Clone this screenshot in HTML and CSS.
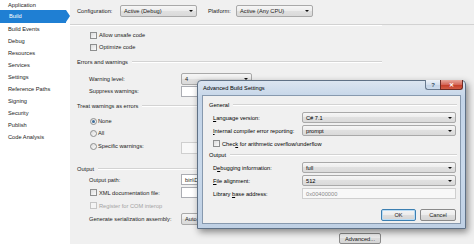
FILE: index.html
```html
<!DOCTYPE html>
<html lang="en">
<head>
  <meta charset="UTF-8">
  <title>Build - Project Properties</title>
  <link rel="stylesheet" href="styles.css">
</head>
<body>
  <div class="window">
    <ul class="nav">
      <li class="first">Application</li>
      <li class="active">Build</li>
      <li>Build Events</li>
      <li>Debug</li>
      <li>Resources</li>
      <li>Services</li>
      <li>Settings</li>
      <li>Reference Paths</li>
      <li>Signing</li>
      <li>Security</li>
      <li>Publish</li>
      <li>Code Analysis</li>
    </ul>

    <div class="panel">
      <div class="topbar">
        <span class="top-label">Configuration:</span>
        <div class="combo top-combo"><span>Active (Debug)</span><i class="arrow"></i></div>
        <span class="top-label platform">Platform:</span>
        <div class="combo top-combo"><span>Active (Any CPU)</span><i class="arrow"></i></div>
      </div>

      <div class="content">
        <div class="row ind"><span class="check"></span><span>Allow unsafe code</span></div>
        <div class="row ind"><span class="check"></span><span>Optimize code</span></div>

        <div class="group g-errors">Errors and warnings</div>
        <div class="row ind g-first"><span class="label">Warning level:</span><div class="combo narrow"><span>4</span><i class="arrow"></i></div></div>
        <div class="row ind"><span class="label">Suppress warnings:</span><div class="textbox wide"></div></div>

        <div class="group g-treat">Treat warnings as errors</div>
        <div class="row ind g-first"><span class="radio on"></span><span>None</span></div>
        <div class="row ind"><span class="radio"></span><span>All</span></div>
        <div class="row ind tall"><span class="radio"></span><span class="radio-label">Specific warnings:</span><div class="textbox wide off"></div></div>

        <div class="group g-output">Output</div>
        <div class="row ind r13"><span class="label">Output path:</span><div class="textbox wide"><span>bin\Debug\</span></div></div>
        <div class="row ind r13"><span class="check"></span><span class="check-label">XML documentation file:</span><div class="textbox wide"></div></div>
        <div class="row ind r13 disabled"><span class="check"></span><span>Register for COM interop</span></div>
        <div class="row ind r13"><span class="label">Generate serialization assembly:</span><div class="combo narrow"><span>Auto</span><i class="arrow"></i></div></div>

        <div class="row adv-row"><button class="btn adv">Advanced...</button></div>
      </div>
    </div>

    <div class="dialog">
      <div class="titlebar">
        <span class="title">Advanced Build Settings</span>
        <div class="caption">
          <span class="cap help">?</span>
          <span class="cap close">&#x2715;</span>
        </div>
      </div>
      <div class="client">
        <div class="group d-group">General</div>
        <div class="drow"><span class="dlabel"><u>L</u>anguage version:</span><div class="combo dcombo"><span>C# 7.1</span><i class="arrow"></i></div></div>
        <div class="drow"><span class="dlabel"><u>I</u>nternal compiler error reporting:</span><div class="combo dcombo"><span>prompt</span><i class="arrow"></i></div></div>
        <div class="drow"><span class="check"></span><span>Chec<u>k</u> for arithmetic overflow/underflow</span></div>

        <div class="group d-group d-output">Output</div>
        <div class="drow d-first"><span class="dlabel">D<u>e</u>bugging information:</span><div class="combo dcombo"><span>full</span><i class="arrow"></i></div></div>
        <div class="drow"><span class="dlabel"><u>F</u>ile alignment:</span><div class="combo dcombo"><span>512</span><i class="arrow"></i></div></div>
        <div class="drow"><span class="dlabel">Library <u>b</u>ase address:</span><div class="textbox dbox off"><span>0x00400000</span></div></div>

        <div class="buttons">
          <button class="btn default">OK</button>
          <button class="btn cancel">Cancel</button>
        </div>
      </div>
    </div>
  </div>
</body>
</html>
```

FILE: styles.css
```css
body {
  margin: 0;
  padding: 0;
  background-color: #ffffff;
  font-family: "Liberation Sans", Arial, sans-serif;
  font-size: 5.7px;
  color: #1b1b1b;
}

.window {
  position: relative;
  width: 474px;
  height: 246px;
  display: flex;
  overflow: hidden;
}

/* left navigation */
.nav {
  list-style: none;
  margin: 0;
  padding: 0;
  width: 70px;
  background-color: #ffffff;
}

.nav li {
  height: 12px;
  line-height: 12px;
  padding-left: 8px;
  white-space: nowrap;
}

.nav li.first {
  height: 10px;
  line-height: 10px;
}

.nav li.active {
  position: relative;
  height: 13px;
  line-height: 13px;
  width: 57px;
  padding-left: 9px;
  background-color: #1f7fd3;
  color: #ffffff;
}

.nav li.active::after {
  content: "";
  position: absolute;
  right: -4px;
  top: 0;
  border-left: 4px solid #1f7fd3;
  border-top: 6.5px solid transparent;
  border-bottom: 6.5px solid transparent;
}

/* main page */
.panel {
  flex: 1;
  background-color: #f0f0f0;
  height: 244px;
}

.topbar {
  display: flex;
  align-items: flex-start;
  box-sizing: border-box;
  height: 25px;
  padding: 5px 0 0 7px;
  border-bottom: 1px solid #d2d2d2;
}

.top-label {
  width: 43px;
  height: 12px;
  line-height: 12px;
}

.top-label.platform {
  width: 28px;
  margin-left: 11px;
}

.top-combo {
  width: 77px;
}

.content {
  width: 305px;
  padding: 3px 0 0 7px;
  border-top: 1px solid #ffffff;
}

.row {
  display: flex;
  align-items: center;
  height: 12px;
  white-space: nowrap;
}

.row.ind {
  padding-left: 12px;
}

.row.tall {
  height: 14px;
}

.row.r13 {
  height: 13px;
}

.row.g-first {
  margin-top: 5px;
}

.g-treat + .row.g-first {
  margin-top: 3px;
}

.label {
  width: 92px;
}

.radio-label {
  width: 83px;
}

.check-label {
  width: 82px;
}

.disabled {
  color: #a3a3a3;
}

/* group headers with a rule */
.group {
  display: flex;
  align-items: center;
  height: 12px;
  white-space: nowrap;
}

.group::after {
  content: "";
  flex: 1;
  margin-left: 4px;
  border-top: 1px solid #d3d3d3;
  border-bottom: 1px solid #ffffff;
}

.g-errors {
  margin-top: 3px;
}

.g-treat {
  margin-top: 3px;
}

.g-output {
  margin-top: 11px;
  height: 9px;
}

/* controls */
.check {
  box-sizing: border-box;
  width: 7px;
  height: 7px;
  margin: 0 2px 0 1px;
  border: 1px solid #8e8f8f;
  background: linear-gradient(135deg, #dcdcdc, #fbfbfb);
}

.disabled .check {
  border-color: #c5c5c5;
  background: #f4f4f4;
}

.radio {
  box-sizing: border-box;
  width: 7px;
  height: 7px;
  margin: 0 1px 0 1px;
  border: 1px solid #8e8f8f;
  border-radius: 50%;
  background: linear-gradient(135deg, #dcdcdc, #fbfbfb);
  display: flex;
  align-items: center;
  justify-content: center;
}

.radio.on::before {
  content: "";
  width: 3px;
  height: 3px;
  border-radius: 50%;
  background: #3e6e9c;
}

.combo {
  box-sizing: border-box;
  display: flex;
  align-items: center;
  height: 12px;
  padding-left: 3px;
  border: 1px solid #a9a9a9;
  border-radius: 2px;
  background: linear-gradient(#f6f6f6, #ececec 50%, #e0e0e0 50%, #dadada);
  white-space: nowrap;
  overflow: hidden;
}

.combo.narrow {
  width: 71px;
}

.arrow {
  margin-left: auto;
  margin-right: 3px;
  width: 0;
  height: 0;
  border-left: 2px solid transparent;
  border-right: 2px solid transparent;
  border-top: 2px solid #111111;
}

.textbox {
  box-sizing: border-box;
  display: flex;
  align-items: center;
  height: 11px;
  padding-left: 3px;
  border: 1px solid #abadb3;
  background-color: #ffffff;
  white-space: nowrap;
}

.textbox.wide {
  width: 200px;
}

.textbox.off {
  border-color: #cfcfcf;
  background-color: #f8f8f8;
  color: #8a8a8a;
}

.row.tall .textbox {
  height: 12px;
  margin-top: 3px;
}

.btn {
  box-sizing: border-box;
  height: 12px;
  padding: 0;
  font-family: inherit;
  font-size: inherit;
  color: #1b1b1b;
  border: 1px solid #8a8a8a;
  border-radius: 2px;
  background: linear-gradient(#f4f4f4, #ececec 50%, #dedede 50%, #d4d4d4);
}

.adv-row {
  justify-content: flex-end;
  margin-top: 8px;
  height: 11px;
}

.btn.adv {
  width: 42px;
  height: 11px;
  margin-right: 1px;
}

/* dialog over the page */
.dialog {
  position: absolute;
  left: 197px;
  top: 80px;
  width: 269px;
  height: 149px;
  box-sizing: border-box;
  display: flex;
  flex-direction: column;
  padding: 0 4px 4px 4px;
  border: 1px solid #5f7186;
  border-radius: 4px 4px 0 0;
  background: linear-gradient(#dbe5f0, #c3d4e8 12%, #c9d9eb 60%, #bfd0e4);
  box-shadow: 2px 3px 7px rgba(0, 0, 0, 0.45);
}

.titlebar {
  display: flex;
  align-items: flex-start;
  height: 14px;
}

.title {
  flex: 1;
  padding-left: 1px;
  line-height: 14px;
  color: #000000;
}

.caption {
  display: flex;
  margin: -1px -2px 0 0;
}

.cap {
  box-sizing: border-box;
  height: 10px;
  display: flex;
  align-items: center;
  justify-content: center;
  border: 1px solid #6a7b90;
  border-top: none;
  font-weight: bold;
}

.cap.help {
  width: 15px;
  border-right: none;
  border-radius: 0 0 0 3px;
  background: linear-gradient(#eef3f9, #d5e0ee 50%, #c2d2e6 50%, #cddbec);
  color: #33475e;
  font-size: 6px;
}

.cap.close {
  width: 23px;
  border-color: #6e2b24;
  border-radius: 0 0 3px 0;
  background: linear-gradient(#e6a89c, #d6695a 50%, #c23a26 50%, #d35d45);
  color: #ffffff;
  font-size: 6px;
}

.client {
  flex: 1;
  box-sizing: border-box;
  padding: 3px 4px 0 6px;
  border: 1px solid #8799ae;
  background-color: #f0f0f0;
  color: #000000;
}

.d-group::after {
  margin-left: 4px;
  margin-right: -1px;
}

.d-output {
  height: 10px;
}

.drow {
  display: flex;
  align-items: center;
  height: 13px;
  padding-left: 4px;
  white-space: nowrap;
}

.drow.d-first {
  margin-top: 1px;
}

.dlabel {
  width: 89px;
}

.dcombo {
  flex: 1;
  height: 11px;
}

.dbox {
  flex: 1;
  height: 11px;
}

.drow .check {
  margin-left: 0;
}

u {
  text-decoration-thickness: 0.5px;
  text-underline-offset: 1px;
}

.buttons {
  display: flex;
  justify-content: flex-end;
  gap: 4px;
  margin-top: 9px;
}

.btn.default {
  width: 35px;
  border-color: #3c7fb1;
  box-shadow: inset 0 0 0 1px #b9dcf5;
}

.btn.cancel {
  width: 36px;
}
```
